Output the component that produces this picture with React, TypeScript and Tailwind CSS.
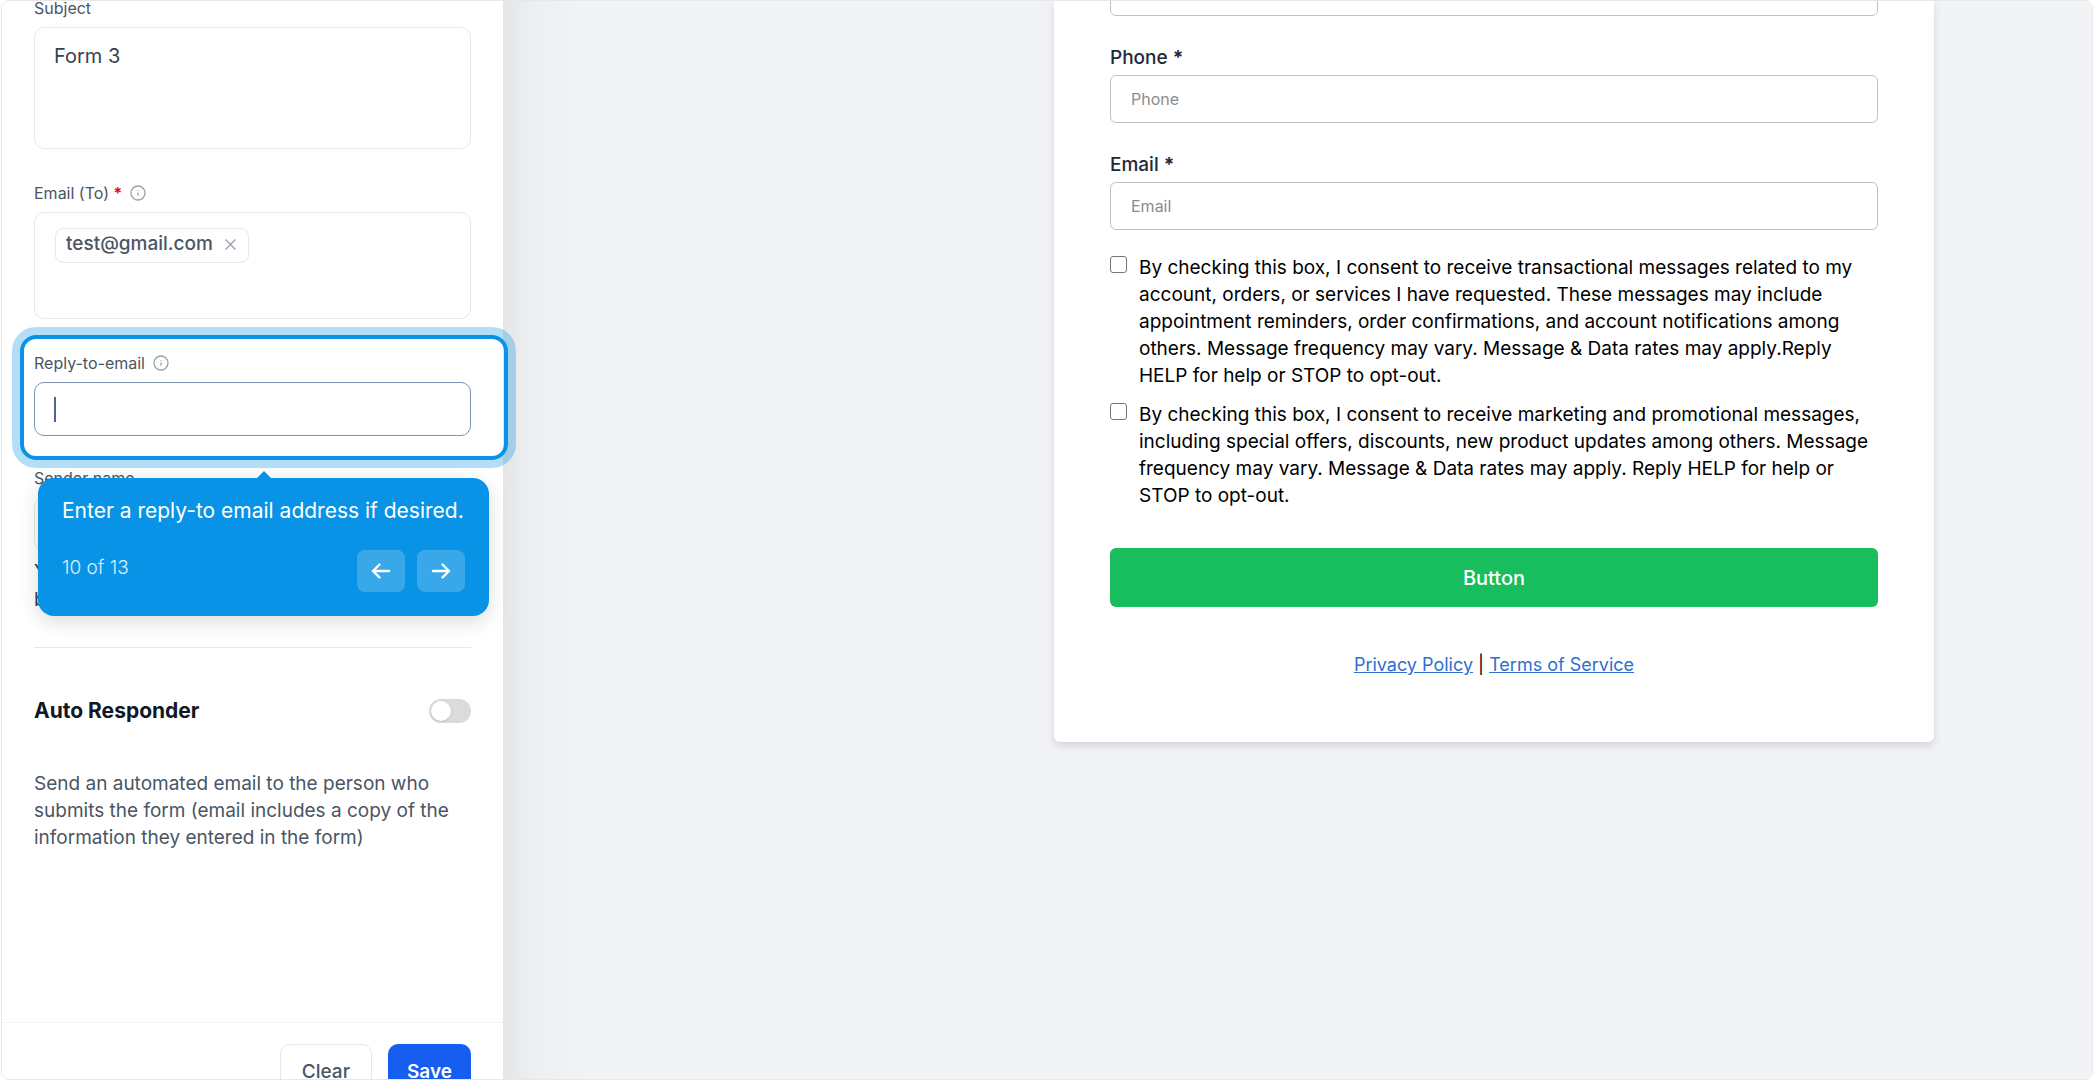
import React, { useState } from 'react';

const InfoIcon = () => (
  <svg viewBox="0 0 16 16" className="size-4 text-gray-400" fill="none" stroke="currentColor" strokeWidth="1.3" aria-hidden="true">
    <circle cx="8" cy="8" r="7" />
    <path d="M8 7.5v3.2M8 5v.8" />
  </svg>
);

const Arrow = ({ flip = false }: { flip?: boolean }) => (
  <svg
    viewBox="0 0 20 20"
    className={flip ? 'size-5 rotate-180' : 'size-5'}
    fill="none"
    stroke="currentColor"
    strokeWidth="2.4"
    strokeLinecap="round"
    strokeLinejoin="round"
    aria-hidden="true"
  >
    <path d="M2 10h16M11.5 3.500l6.500 6.500-6.500 6.500" />
  </svg>
);

const consents = [
  {
    id: 'transactional',
    text: 'By checking this box, I consent to receive transactional messages related to my account, orders, or services I have requested. These messages may include appointment reminders, order confirmations, and account notifications among others. Message frequency may vary. Message & Data rates may apply.Reply HELP for help or STOP to opt-out.',
  },
  {
    id: 'marketing',
    text: 'By checking this box, I consent to receive marketing and promotional messages, including special offers, discounts, new product updates among others. Message frequency may vary. Message & Data rates may apply. Reply HELP for help or STOP to opt-out.',
  },
];

// Sits over the fields below the highlighted one
const TourTooltip = () => (
  <div
    role="dialog"
    aria-label="Tour step"
    className="absolute left-1 top-[127px] z-20 w-[451px] rounded-2xl bg-[#0893e6] px-6 pb-6 pt-[18px] text-white shadow-[0_6px_20px_rgba(0,0,0,0.14)]"
  >
    <div className="absolute -top-[7px] left-[219px] border-x-7 border-b-7 border-x-transparent border-b-[#0893e6]" />
    <p className="whitespace-nowrap text-[21px] leading-[30px]">Enter a reply-to email address if desired.</p>
    <div className="mt-6 flex items-center justify-between">
      <span className="pb-1.5 text-[19px] font-light text-white/85">10 of 13</span>
      <div className="flex gap-3">
        <button aria-label="Previous step" className="flex h-[42px] w-12 items-center justify-center rounded-lg bg-white/20">
          <Arrow flip />
        </button>
        <button aria-label="Next step" className="flex h-[42px] w-12 items-center justify-center rounded-lg bg-white/20">
          <Arrow />
        </button>
      </div>
    </div>
  </div>
);

const SettingsPanel = () => {
  const [autoRespond, setAutoRespond] = useState(false);

  return (
    <aside className="relative z-10 flex w-[501px] shrink-0 flex-col bg-white text-gray-600">
      <div className="flex-1 px-8">
        <label htmlFor="subject" className="-mt-[5px] block text-[16px] leading-6">Subject</label>
        <textarea
          id="subject"
          defaultValue="Form 3"
          className="mt-[7px] block h-[122px] w-full resize-none rounded-[10px] border border-gray-200 px-[19px] py-[14px] text-[20px] leading-7 text-gray-700 outline-none"
        />

        <div className="mt-8 flex items-center gap-2 text-[16px] leading-6">
          <label htmlFor="email-to">
            Email (To) <span className="font-semibold text-red-600">*</span>
          </label>
          <InfoIcon />
        </div>
        <div className="mt-[7px] flex h-[107px] w-full items-start rounded-[10px] border border-gray-200 px-5 py-[15px]">
          <span className="flex h-[35px] shrink-0 items-center gap-3 rounded-lg border border-gray-200 pb-[2px] pl-[10px] pr-3 text-[19px] font-medium">
            test@gmail.com
            <button aria-label="Remove test@gmail.com" className="text-gray-400">
              <svg viewBox="0 0 10 10" className="size-[11px]" fill="none" stroke="currentColor" strokeWidth="1.2">
                <path d="M.5.500l9 9M9.500.500l-9 9" />
              </svg>
            </button>
          </span>
          <input id="email-to" className="min-w-0 flex-1 outline-none" />
        </div>

        <div className="relative z-10 mt-8">
          <div className="pointer-events-none absolute -left-[14px] -right-[37px] -top-4 h-[125px] rounded-2xl border-4 border-[#0893e6] shadow-[0_0_0_8px_rgba(8,147,230,0.3)]" />
          <div className="flex items-center gap-2 text-[16px] leading-6">
            <label htmlFor="reply-to">Reply-to-email</label>
            <InfoIcon />
          </div>
          <div className="mt-[7px] flex h-[54px] items-center rounded-[10px] border border-[#8093b5] px-[19px]">
            <span className="h-[25px] w-[2px] bg-[#48698f]" />
            <input id="reply-to" className="min-w-0 flex-1 text-[19px] caret-transparent outline-none" />
          </div>
          <TourTooltip />
        </div>

        <div className="mt-[30px]">
          <label htmlFor="sender" className="block text-[16px] leading-6">Sender name</label>
          <input id="sender" className="mt-[7px] block h-[54px] w-full rounded-[10px] border border-gray-200 px-[19px]" />
          <p className="mt-[7px] text-[19px] leading-7 text-gray-700">
            You can use the sender name<br />by default
          </p>
        </div>

        <hr className="mt-[33px] border-gray-200" />

        <div className="mt-12 flex items-center justify-between">
          <h2 className="text-[21px] font-bold leading-[30px] text-gray-900">Auto Responder</h2>
          <button
            role="switch"
            aria-checked={autoRespond}
            aria-label="Auto Responder"
            onClick={() => setAutoRespond(!autoRespond)}
            className="flex h-6 w-[42px] items-center rounded-full bg-[#dbdbdb] px-[2px]"
          >
            <span className="size-5 rounded-full bg-white shadow" />
          </button>
        </div>
        <p className="mt-11 text-[19px] leading-[27px]">
          Send an automated email to the person who submits the form (email includes a copy of the information they entered in the form)
        </p>
      </div>

      <footer className="flex h-[57px] shrink-0 justify-end gap-4 overflow-hidden border-t border-gray-100 px-8 pt-[21px]">
        <button className="h-14 rounded-[10px] border border-gray-200 px-[21px] text-[19px] font-medium">Clear</button>
        <button className="h-14 rounded-[10px] bg-[#155eef] px-[19px] text-[19px] font-semibold text-white">Save</button>
      </footer>
    </aside>
  );
};

const Field = ({ id, label }: { id: string; label: string }) => (
  <div className="mt-7">
    <label htmlFor={id} className="block text-[19px] font-medium leading-7 text-gray-800">
      {label} <span className="font-bold">*</span>
    </label>
    <input
      id={id}
      placeholder={label}
      className="mt-[3px] block h-12 w-full rounded-md border border-[#c0c0c0] px-5 text-[16px] placeholder:text-[#8c8c8c]"
    />
  </div>
);

const FormPreview = () => (
  <main className="flex flex-1 items-start justify-end bg-[linear-gradient(90deg,#e5e6e7,#edeef0_28px,#f2f3f5_76px)] pr-[158px]">
    <form className="w-full max-w-[880px] rounded-b-md bg-white px-14 pb-16 text-black shadow-[0_4px_8px_rgba(30,40,70,0.15)]">
      <input aria-label="Name" className="-mt-[33px] block h-12 w-full rounded-md border border-[#c0c0c0] px-5" />
      <Field id="phone" label="Phone" />
      <Field id="email" label="Email" />

      <div className="mt-6 flex flex-col gap-3">
        {consents.map(({ id, text }) => (
          <div key={id} className="flex items-start gap-3">
            <input
              type="checkbox"
              id={id}
              className="mt-[2px] size-[17px] shrink-0 appearance-none rounded-[3px] border border-[#767676] bg-white"
            />
            <label htmlFor={id} className="text-[19px] leading-[27px]">{text}</label>
          </div>
        ))}
      </div>

      <button type="button" className="mt-[39px] h-[59px] w-full rounded-md bg-[#18bd5d] text-[20px] font-medium text-white">
        Button
      </button>

      <p className="mt-11 text-center text-[18px] leading-[27px]">
        <a href="#privacy" className="text-[#2f6fd0] underline">Privacy Policy</a> |{' '}
        <a href="#terms" className="text-[#2f6fd0] underline">Terms of Service</a>
      </p>
    </form>
  </main>
);

const App = () => (
  <div className="h-screen bg-white px-px font-['Inter',sans-serif]">
    <div className="flex h-full overflow-hidden rounded-lg border border-gray-200">
      <SettingsPanel />
      <FormPreview />
    </div>
  </div>
);

export default App;
